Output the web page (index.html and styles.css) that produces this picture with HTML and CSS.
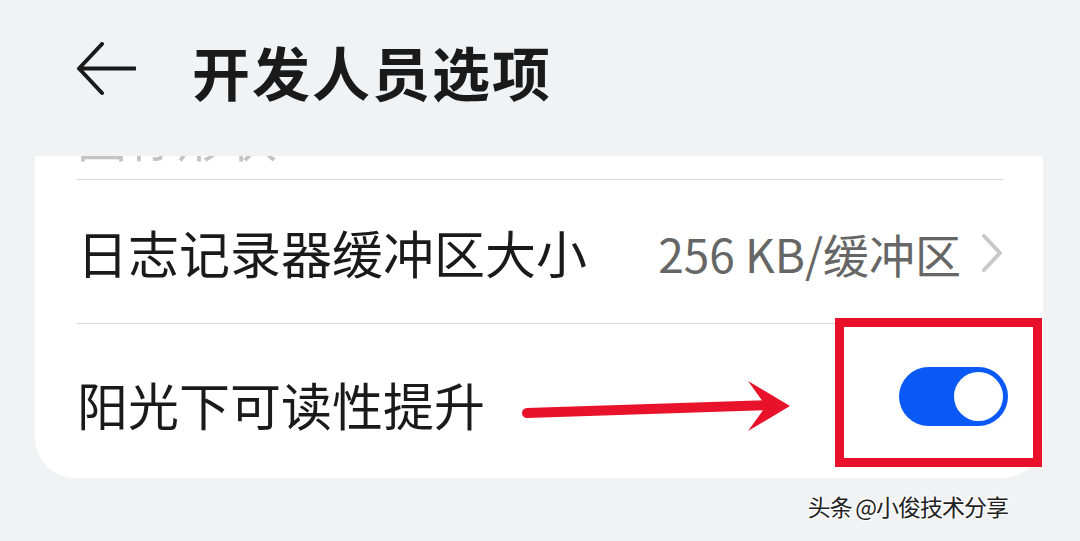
FILE: index.html
```html
<!DOCTYPE html>
<html lang="zh-CN">
<head>
<meta charset="utf-8">
<link rel="stylesheet" href="styles.css">
</head>
<body>
<div class="screen">
  <header class="topbar">
    <svg class="back" width="60" height="54" viewBox="0 0 60 54">
      <path d="M26 2 L3 26.5 L26 51 M3 26.5 L59 26.5" fill="none" stroke="#1a1a1a" stroke-width="4" stroke-linecap="round" stroke-linejoin="round"/>
    </svg>
    <h1 class="title">开发人员选项</h1>
  </header>
  <section class="card">
    <div class="clipped"><span class="clipped-text">图标形状</span></div>
    <div class="divider"></div>
    <div class="row row-log">
      <span class="label">日志记录器缓冲区大小</span>
      <span class="value">256 KB/缓冲区</span>
      <svg class="chev" width="22" height="40" viewBox="0 0 22 40">
        <path d="M3 3 L19 20 L3 37" fill="none" stroke="#c8c8c8" stroke-width="4" stroke-linecap="round" stroke-linejoin="round"/>
      </svg>
    </div>
    <div class="divider"></div>
    <div class="row row-sun">
      <span class="label">阳光下可读性提升</span>
      <div class="toggle"><div class="thumb"></div></div>
    </div>
  </section>
  <div class="watermark">头条&#8201;@小俊技术分享</div>
  <svg class="red-arrow" width="290" height="60" viewBox="0 0 290 60">
    <path d="M5 42 L250 34" stroke="#e8132b" stroke-width="10" stroke-linecap="round"/>
    <path d="M226 10 L268 35 L226 60 L244 35 Z" fill="#e8132b"/>
  </svg>
  <div class="red-box"></div>
</div>
</body>
</html>
```

FILE: styles.css
```css
* { box-sizing: border-box; margin: 0; padding: 0; }
html, body {
  width: 1080px;
  height: 541px;
  overflow: hidden;
  background: #f1f2f4;
  font-family: "Noto Sans CJK SC", "Noto Sans", sans-serif;
  color: #1a1a1a;
}
.screen {
  position: relative;
  width: 1080px;
  height: 541px;
  display: flex;
  flex-direction: column;
}
.topbar {
  height: 156px;
  display: flex;
  align-items: center;
  padding-left: 76px;
  padding-bottom: 8px;
}
.back { margin-right: 56px; margin-top: -10px; }
.title {
  font-size: 58px;
  font-weight: 700;
  letter-spacing: 2px;
  line-height: 1;
  margin-top: -6px;
}
.card {
  margin-left: 35px;
  width: 1008px;
  background: #fff;
  border-radius: 0 0 40px 40px;
  padding: 0 40px 0 42px;
  display: flex;
  flex-direction: column;
}
.clipped {
  height: 23px;
  overflow: hidden;
}
.clipped-text {
  display: block;
  font-size: 50px;
  line-height: 50px;
  margin-top: -46px;
  color: #c4c4c4;
}
.divider {
  height: 1px;
  background: #d9d9d9;
}
.row {
  display: flex;
  align-items: center;
}
.row-log { height: 143px; padding-top: 2px; }
.row-sun { height: 154px; padding-top: 2px; }
.label {
  font-size: 51px;
  line-height: 1;
  flex: 1;
}
.row-sun .label { margin-top: 4px; }
.value {
  font-size: 46px;
  color: #666;
  line-height: 1;
  margin-right: 20px;
}
.chev { display: block; }
.toggle {
  width: 109px;
  height: 59px;
  border-radius: 30px;
  background: #0a59f7;
  display: flex;
  align-items: center;
  justify-content: flex-end;
  padding-right: 5px;
  margin-right: -5px;
  margin-top: -12px;
}
.thumb {
  width: 49px;
  height: 49px;
  border-radius: 50%;
  background: #fff;
}
.watermark {
  align-self: flex-end;
  margin-right: 72px;
  margin-top: 17px;
  font-size: 23px;
  letter-spacing: -1px;
  line-height: 1;
  color: #222;
  text-shadow: 1px 1px 0 #fff, -1px -1px 0 #fff, 1px -1px 0 #fff, -1px 1px 0 #fff;
}
.red-arrow {
  position: absolute;
  left: 522px;
  top: 371px;
}
.red-box {
  position: absolute;
  left: 835px;
  top: 318px;
  width: 207px;
  height: 149px;
  border: 9px solid #e8102a;
}
```
